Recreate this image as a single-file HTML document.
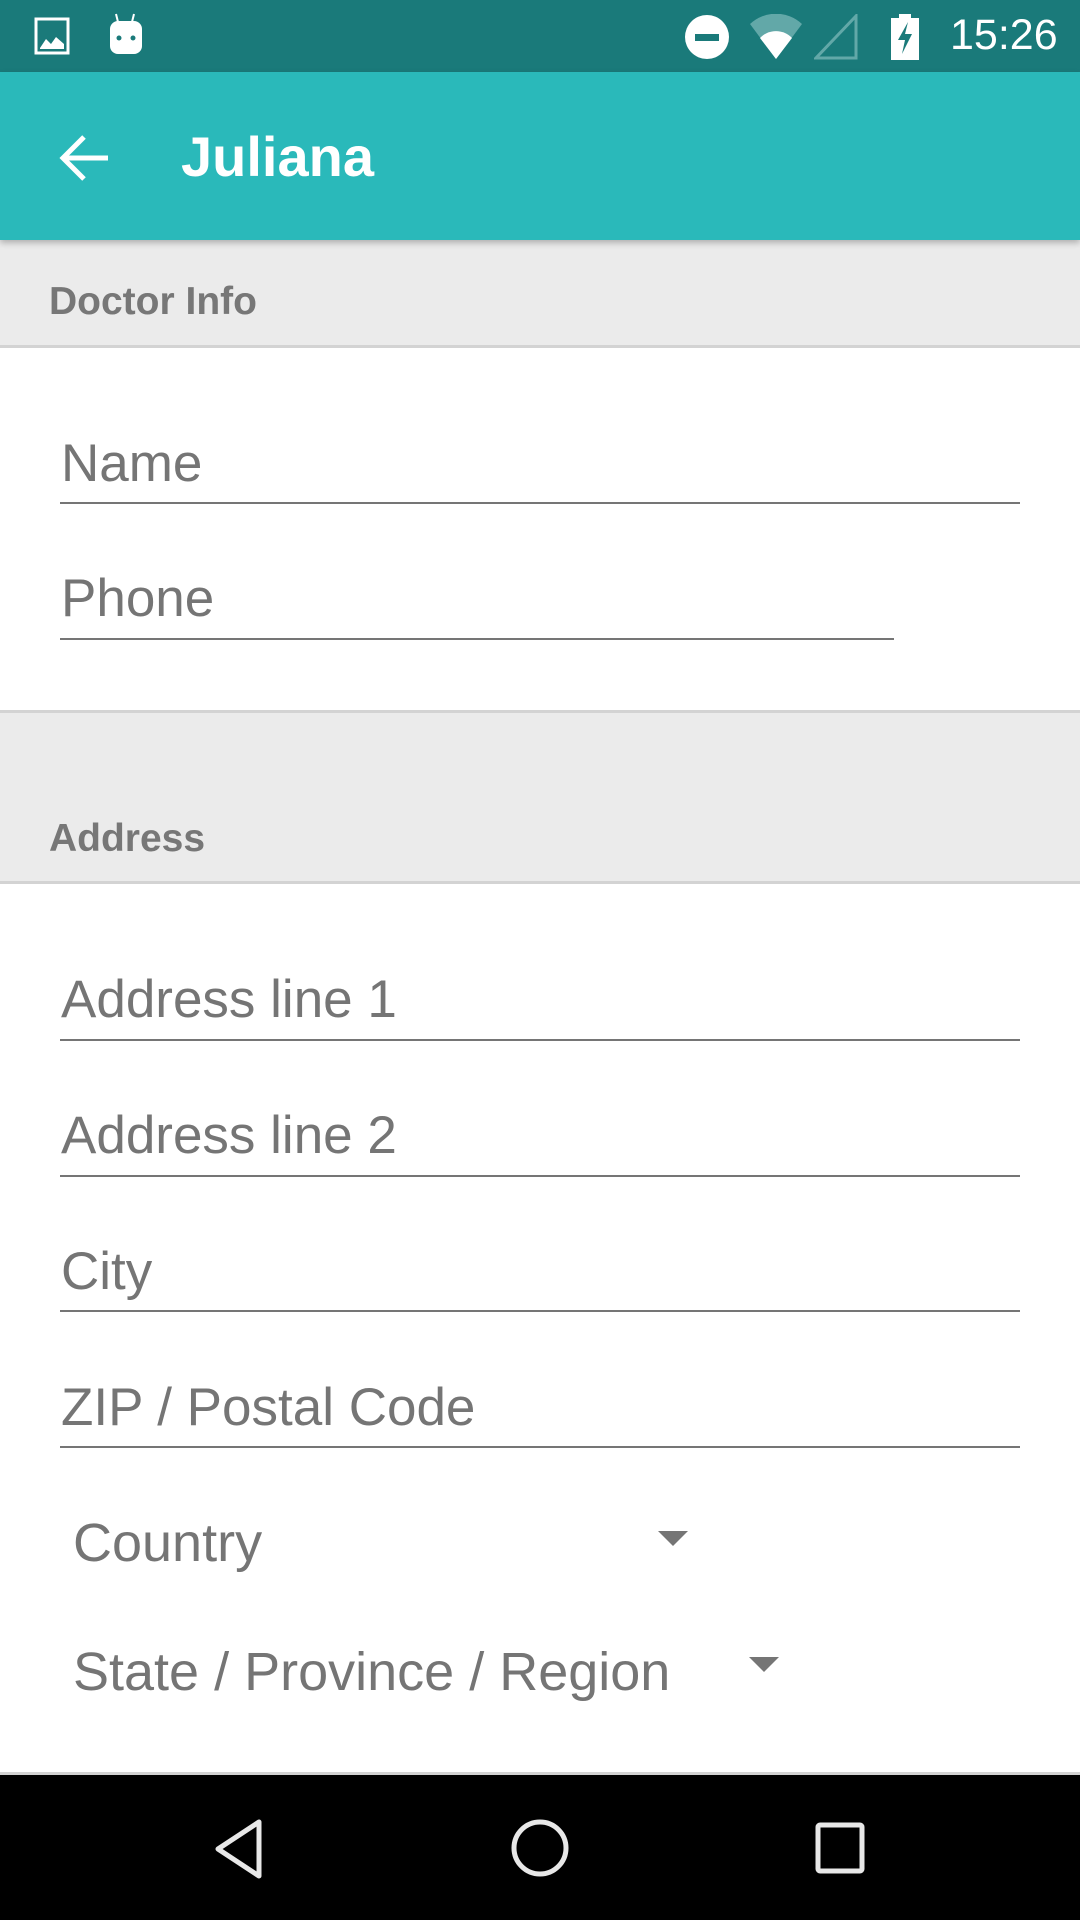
<!DOCTYPE html>
<html><head><meta charset="utf-8"><style>
*{margin:0;padding:0;box-sizing:border-box}
body{width:1080px;height:1920px;position:relative;overflow:hidden;background:#fff;font-family:"Liberation Sans",sans-serif}
.a{position:absolute}
.lbl{position:absolute;font-size:53px;color:#757575;line-height:1}
.sp{font-size:54px}
.ul{position:absolute;height:2px;background:#757575;left:60px}
.hdr{position:absolute;left:0;width:1080px;background:#ebebeb;border-bottom:3px solid #d3d3d3}
.ht{position:absolute;left:49px;font-size:39px;font-weight:bold;color:#777;line-height:1}
</style></head><body>
<div class="a" style="left:0;top:0;width:1080px;height:72px;background:#1a7a7a"></div>
<svg class="a" style="left:34px;top:17px" width="40" height="40" viewBox="0 0 40 40"><rect x="2" y="2" width="32" height="34" fill="none" stroke="#fff" stroke-width="3"/><path d="M6 31 L12 22 L17 27 L22 20 L30 27 L30 32 L6 32Z" fill="#fff"/></svg>
<svg class="a" style="left:106px;top:12px" width="40" height="44" viewBox="0 0 40 44"><path d="M10 2 L12 10 M28 2 L26 10" stroke="#fff" stroke-width="2"/><rect x="4" y="9" width="32" height="33" rx="8" fill="#fff"/><circle cx="13" cy="26" r="2.5" fill="#1a7a7a"/><circle cx="27" cy="26" r="2.5" fill="#1a7a7a"/></svg>
<svg class="a" style="left:684px;top:14px" width="46" height="46"><circle cx="23" cy="23" r="22" fill="#fff"/><rect x="11" y="20" width="24" height="7" fill="#1a7a7a"/></svg>
<svg class="a" style="left:748px;top:14px" width="56" height="46" viewBox="0 0 56 46"><path d="M2 10 A38 38 0 0 1 54 10 L28 45Z" fill="#62a8a8"/><path d="M12 24 A22 22 0 0 1 44 24 L28 45Z" fill="#fff"/></svg>
<svg class="a" style="left:814px;top:14px" width="44" height="46"><path d="M42 2 L42 44 L2 44Z" fill="none" stroke="#62a8a8" stroke-width="3"/></svg>
<svg class="a" style="left:890px;top:14px" width="30" height="46" viewBox="0 0 30 46"><rect x="9" y="0" width="12" height="5" fill="#fff"/><rect x="1" y="4" width="28" height="42" fill="#fff"/><path d="M18 8 L8 26 L15 26 L12 40 L22 20 L15 20 Z" fill="#1a7a7a"/></svg>
<div class="a" style="left:950px;top:14px;font-size:43px;color:#fff;line-height:1">15:26</div>
<div class="a" style="left:0;top:72px;width:1080px;height:168px;background:#2ab9ba;box-shadow:0 3px 6px rgba(0,0,0,.25);z-index:2"></div>
<svg class="a" style="left:58px;top:133px;z-index:3" width="54" height="50" viewBox="0 0 54 50"><path d="M50 25 L6 25 M26 4 L5 25 L26 46" fill="none" stroke="#fff" stroke-width="5"/></svg>
<div class="a" style="left:181px;top:129px;font-size:56px;font-weight:bold;color:#fff;line-height:1;z-index:3">Juliana</div>
<div class="hdr" style="top:240px;height:108px"><div class="ht" style="top:42px">Doctor Info</div></div>
<div class="lbl" style="left:61px;top:437px">Name</div><div class="ul" style="top:502px;width:960px"></div>
<div class="lbl" style="left:61px;top:572px">Phone</div><div class="ul" style="top:638px;width:834px"></div>
<div class="hdr" style="top:710px;height:174px;border-top:3px solid #d3d3d3"><div class="ht" style="top:106px">Address</div></div>
<div class="lbl" style="left:61px;top:973px">Address line 1</div><div class="ul" style="top:1039px;width:960px"></div>
<div class="lbl" style="left:61px;top:1109px">Address line 2</div><div class="ul" style="top:1175px;width:960px"></div>
<div class="lbl" style="left:61px;top:1245px">City</div><div class="ul" style="top:1310px;width:960px"></div>
<div class="lbl" style="left:61px;top:1381px">ZIP / Postal Code</div><div class="ul" style="top:1446px;width:960px"></div>
<div class="lbl sp" style="left:73px;top:1516px">Country</div>
<svg class="a" style="left:658px;top:1531px" width="30" height="15"><path d="M0 0 L30 0 L15 15Z" fill="#757575"/></svg>
<div class="lbl sp" style="left:73px;top:1645px">State / Province / Region</div>
<svg class="a" style="left:749px;top:1657px" width="30" height="15"><path d="M0 0 L30 0 L15 15Z" fill="#757575"/></svg>
<div class="a" style="left:0;top:1772px;width:1080px;height:3px;background:#d3d3d3"></div>
<div class="a" style="left:0;top:1775px;width:1080px;height:145px;background:#000"></div>
<svg class="a" style="left:212px;top:1818px" width="52" height="62" viewBox="0 0 52 62"><path d="M47 4 L47 58 L6 31Z" fill="none" stroke="#e8e8e8" stroke-width="5" stroke-linejoin="round"/></svg>
<svg class="a" style="left:510px;top:1818px" width="60" height="60"><circle cx="30" cy="30" r="26" fill="none" stroke="#e8e8e8" stroke-width="5"/></svg>
<svg class="a" style="left:814px;top:1821px" width="52" height="54"><rect x="4" y="4" width="44" height="46" fill="none" stroke="#e8e8e8" stroke-width="5" rx="2"/></svg>
</body></html>
